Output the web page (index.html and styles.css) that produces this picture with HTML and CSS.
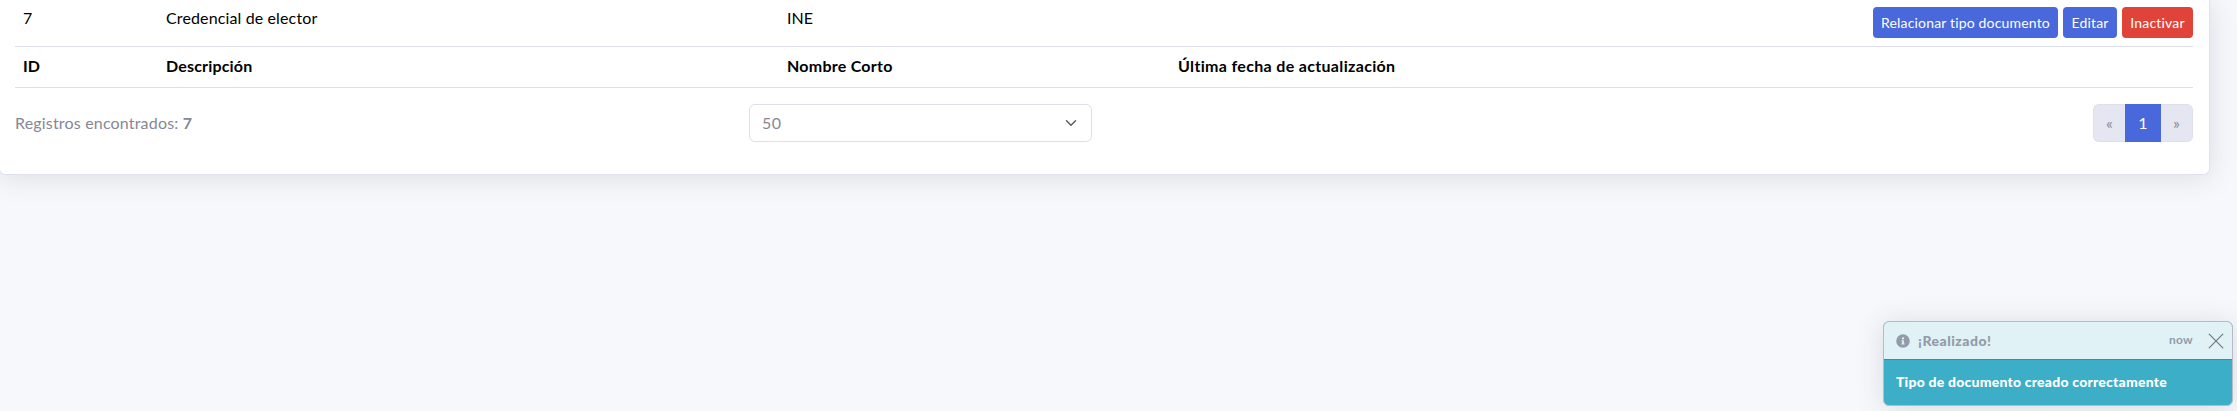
FILE: index.html
```
<!DOCTYPE html>
<html lang="es">
<head>
<meta charset="utf-8">
<title>Tipos de documento</title>
<link rel="stylesheet" href="styles.css">
</head>
<body>
<main class="card">
  <div class="row record">
    <span class="c-id">7</span><span class="t-cred">Credencial de elector</span><span class="t-ine">INE</span><span></span>
    <div class="actions">
      <button class="btn b1">Relacionar tipo documento</button>
      <button class="btn b2">Editar</button>
      <button class="btn b3 danger">Inactivar</button>
    </div>
  </div>
  <div class="row labels">
    <b>ID</b><b class="t-desc">Descripción</b><b class="t-nom">Nombre Corto</b><b class="t-ult">Última fecha de actualización</b>
  </div>
  <footer class="foot">
    <div class="count">Registros encontrados: <b>7</b></div>
    <div class="select"><span>50</span>
      <svg width="12" height="12" viewBox="0 0 16 16"><path d="m2 5 6 6 6-6" fill="none" stroke="#5a5c69" stroke-width="2" stroke-linecap="round" stroke-linejoin="round"/></svg>
    </div>
    <nav class="pager"><span class="pg prev">«</span><span class="pg on">1</span><span class="pg next">»</span></nav>
  </footer>
</main>
<aside class="toast">
  <header class="toast-head">
    <svg class="info" width="14" height="14" viewBox="0 0 512 512"><path fill="#939aa8" d="M256 8a248 248 0 1 0 0 496 248 248 0 0 0 0-496zm0 110a42 42 0 1 1 0 84 42 42 0 0 1 0-84zm56 254c0 7-5 12-12 12h-88c-7 0-12-5-12-12v-24c0-7 5-12 12-12h12v-64h-12c-7 0-12-5-12-12v-24c0-7 5-12 12-12h64c7 0 12 5 12 12v100h12c7 0 12 5 12 12z"/></svg>
    <strong class="toast-title">¡Realizado!</strong>
    <small class="now">now</small>
    <svg class="close" width="16" height="16" viewBox="0 0 16 16"><path d="M1.2 1.2 14.8 14.8M14.8 1.2 1.2 14.8" stroke="#707979" stroke-width="1.2" stroke-linecap="round"/></svg>
  </header>
  <div class="toast-body">Tipo de documento creado correctamente</div>
</aside>
</body>
</html>
```
FILE: styles.css
```
* { box-sizing: border-box; }
body { margin: 0; width: 2237px; height: 411px; overflow: hidden; background: #f7f8fc; font: 16px/24px Lato, "Open Sans", sans-serif; color: #000; }
.card { width: 2211px; height: 175px; margin-left: -1px; padding: 0 16px 0 15px; background: #fff; border: 1px solid #dfe2ee; border-top: 0; border-radius: 0 0 6px 6px; box-shadow: 0 2px 28px rgba(58,59,69,.15); }
.row { display: grid; grid-template-columns: 143px 621px 391px 1fr auto; border-bottom: 1px solid #dddfeb; padding-left: 8px; white-space: nowrap; }
.record { height: 47px; padding-top: 6px; }
.labels { height: 41px; padding-top: 7px; }
.t-cred { letter-spacing: .13px; }
.t-desc { letter-spacing: .17px; }
.t-nom { letter-spacing: .25px; }
.t-ult { letter-spacing: .33px; }
.actions { display: flex; gap: 5px; align-items: flex-start; padding-top: 1px; }
.btn { height: 31px; border: 0; border-radius: 4px; background: #4868db; color: #fff; font: 14px/21px Lato, sans-serif; padding: 0 0 1px; text-align: center; letter-spacing: .17px; }
.b1 { width: 185px; }
.b2 { width: 54px; }
.b3 { width: 71px; }
.danger { background: #e04438; }
.foot { display: grid; grid-template-columns: 734px 343px 1fr; align-items: center; padding-top: 16px; color: #858796; }
.count { letter-spacing: .18px; padding-bottom: 1px; }
.select { height: 38px; border: 1px solid #dddfeb; border-radius: 6px; display: flex; align-items: center; justify-content: space-between; padding: 0 14px 0 12px; }
.select span { letter-spacing: .4px; padding-bottom: 1px; }
.pager { display: flex; justify-self: end; height: 38px; }
.pg { width: 32px; background: #e4e7f1; display: flex; align-items: center; justify-content: center; border: 1px solid #dddfeb; }
.prev { border-radius: 6px 0 0 6px; border-right: 0; }
.next { border-radius: 0 6px 6px 0; border-left: 0; }
.on { width: 36px; background: #4868db; border-color: #4868db; color: #fff; }
.toast { position: absolute; left: 1883px; top: 321px; width: 350px; height: 85px; border: 1px solid #b5bcc5; border-radius: 6px; background: #3caec8; box-shadow: 0 2px 28px rgba(58,59,69,.15); overflow: hidden; font-size: 14px; }
.toast-head { height: 38px; background: #e0f2f5; border-bottom: 1px solid #358ea6; display: flex; align-items: center; padding: 0 8px 0 12px; color: #939aa8; }
.toast-title { margin-left: 8px; margin-right: auto; font-weight: 900; letter-spacing: .5px; }
.now { font-size: 12px; font-weight: 700; letter-spacing: .3px; margin-right: 15px; padding-bottom: 1px; }
.toast-body { padding: 10px 12px; color: #fff; font-weight: 900; letter-spacing: .22px; white-space: nowrap; }
```
